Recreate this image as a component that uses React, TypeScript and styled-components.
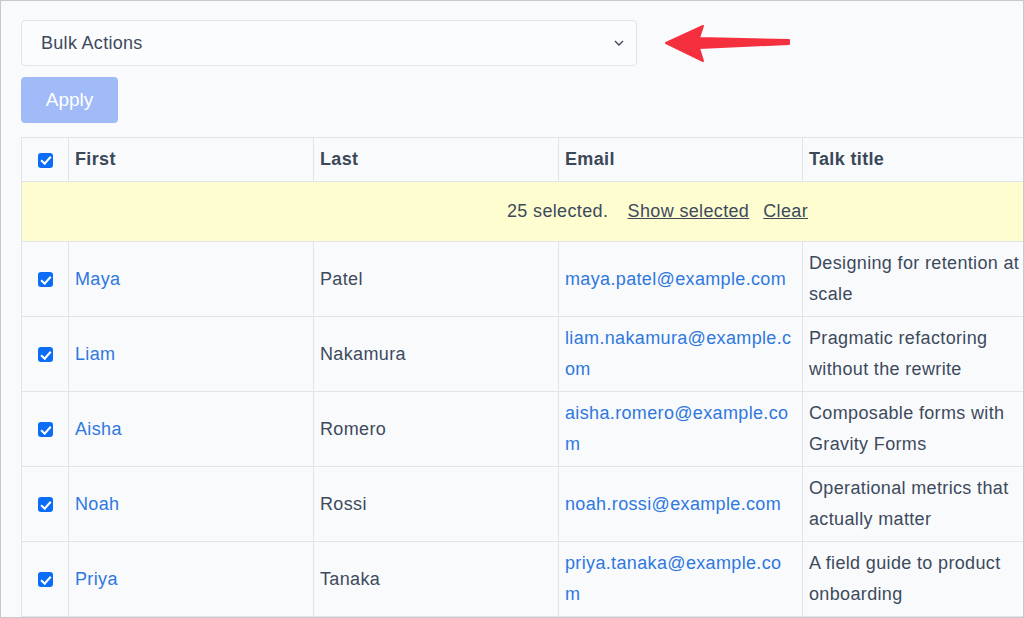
import React from "react";
import styled, { createGlobalStyle } from "styled-components";

const Global = createGlobalStyle`
  html, body { margin: 0; padding: 0; }
  body { font-family: "Liberation Sans", Arial, sans-serif; background: #f9fafc; }
`;

const Frame = styled.div`
  position: relative;
  width: 1024px; height: 618px; box-sizing: border-box;
  border: 1px solid #c9c9c9; overflow: hidden; background: #f9fafc;
  padding: 19px 0 0 20px;
`;
const Select = styled.div`
  width: 616px; height: 46px; box-sizing: border-box;
  border: 1px solid #dfe3ea; border-radius: 4px; background: #fbfcfd;
  display: flex; align-items: center; justify-content: space-between;
  padding: 0 12px 0 19px; font-size: 18px; letter-spacing: 0.3px; color: #3d4a5c;
`;
const Apply = styled.button`
  margin-top: 11px; width: 97px; height: 46px; border: none; border-radius: 4px;
  background: #a0bbf7; color: #fff; font-family: inherit; font-size: 19px;
  display: block;
`;
const Arrow = styled.svg`
  position: absolute; left: 664px; top: 22px;
`;
const Table = styled.table`
  margin-top: 14px; border-collapse: collapse; table-layout: fixed;
  width: 1011px; font-size: 18px; letter-spacing: 0.35px; color: #3d4a5c;
  td, th { border: 1px solid #e1e5eb; vertical-align: middle; }
`;
const Th = styled.th`
  height: 43px; text-align: left; font-weight: bold; padding: 0 6px; color: #3b4858;
`;
const Td = styled.td<{ $wrap?: boolean }>`
  height: 74px; padding: 0 6px; line-height: 31px;
  word-break: ${(p) => (p.$wrap ? "normal" : "break-all")};
`;
const Link = styled.a`
  color: #2f78e0; text-decoration: none;
`;
const Banner = styled.td`
  height: 57px; background: #fefdd0; text-align: center; color: #3d4a5c; padding-left: 262px;
  u { margin-left: 14px; }
`;
const Box = styled.span`
  display: inline-block; width: 15px; height: 15px; border-radius: 3px; background: #0b6df6;
  vertical-align: middle; position: relative;
  &::after {
    content: ""; position: absolute; left: 5px; top: 1.5px; width: 3.5px; height: 8px;
    border: solid #fff; border-width: 0 2.5px 2.5px 0; transform: rotate(42deg);
  }
`;
const CbCell = styled.td`
  text-align: center; padding: 0;
`;

const rows = [
  ["Maya", "Patel", "maya.patel@example.com", "Designing for retention at scale"],
  ["Liam", "Nakamura", "liam.nakamura@example.com", "Pragmatic refactoring without the rewrite"],
  ["Aisha", "Romero", "aisha.romero@example.com", "Composable forms with Gravity Forms"],
  ["Noah", "Rossi", "noah.rossi@example.com", "Operational metrics that actually matter"],
  ["Priya", "Tanaka", "priya.tanaka@example.com", "A field guide to product onboarding"],
  ["Ethan", "Kim", "ethan.kim@example.com", "Shipping faster"],
];

export default function App() {
  return (
    <Frame>
      <Global />
      <Select>
        <span>Bulk Actions</span>
        <svg width="10" height="6" viewBox="0 0 10 6"><path d="M1 1l4 4 4-4" fill="none" stroke="#3d4a5c" strokeWidth="1.4" /></svg>
      </Select>
      <Apply>Apply</Apply>
      <Arrow width="130" height="42" viewBox="0 0 130 42">
        <path d="M1 20 L38 3 L34 15 L124 17 L124 21 L34 25 L38 38 Z" fill="#f5303e" stroke="#f5303e" strokeWidth="2" strokeLinejoin="round" />
      </Arrow>
      <Table>
        <colgroup>
          <col style={{ width: 47 }} /><col style={{ width: 245 }} /><col style={{ width: 245 }} /><col style={{ width: 244 }} /><col style={{ width: 230 }} />
        </colgroup>
        <thead>
          <tr>
            <CbCell as="th"><Box /></CbCell>
            <Th>First</Th><Th>Last</Th><Th>Email</Th><Th>Talk title</Th>
          </tr>
        </thead>
        <tbody>
          <tr><Banner colSpan={5}>25 selected. <u>Show selected</u><u>Clear</u></Banner></tr>
          {rows.map((r) => (
            <tr key={r[0]}>
              <CbCell><Box /></CbCell>
              <Td><Link>{r[0]}</Link></Td>
              <Td>{r[1]}</Td>
              <Td><Link>{r[2]}</Link></Td>
              <Td $wrap>{r[3]}</Td>
            </tr>
          ))}
        </tbody>
      </Table>
    </Frame>
  );
}
